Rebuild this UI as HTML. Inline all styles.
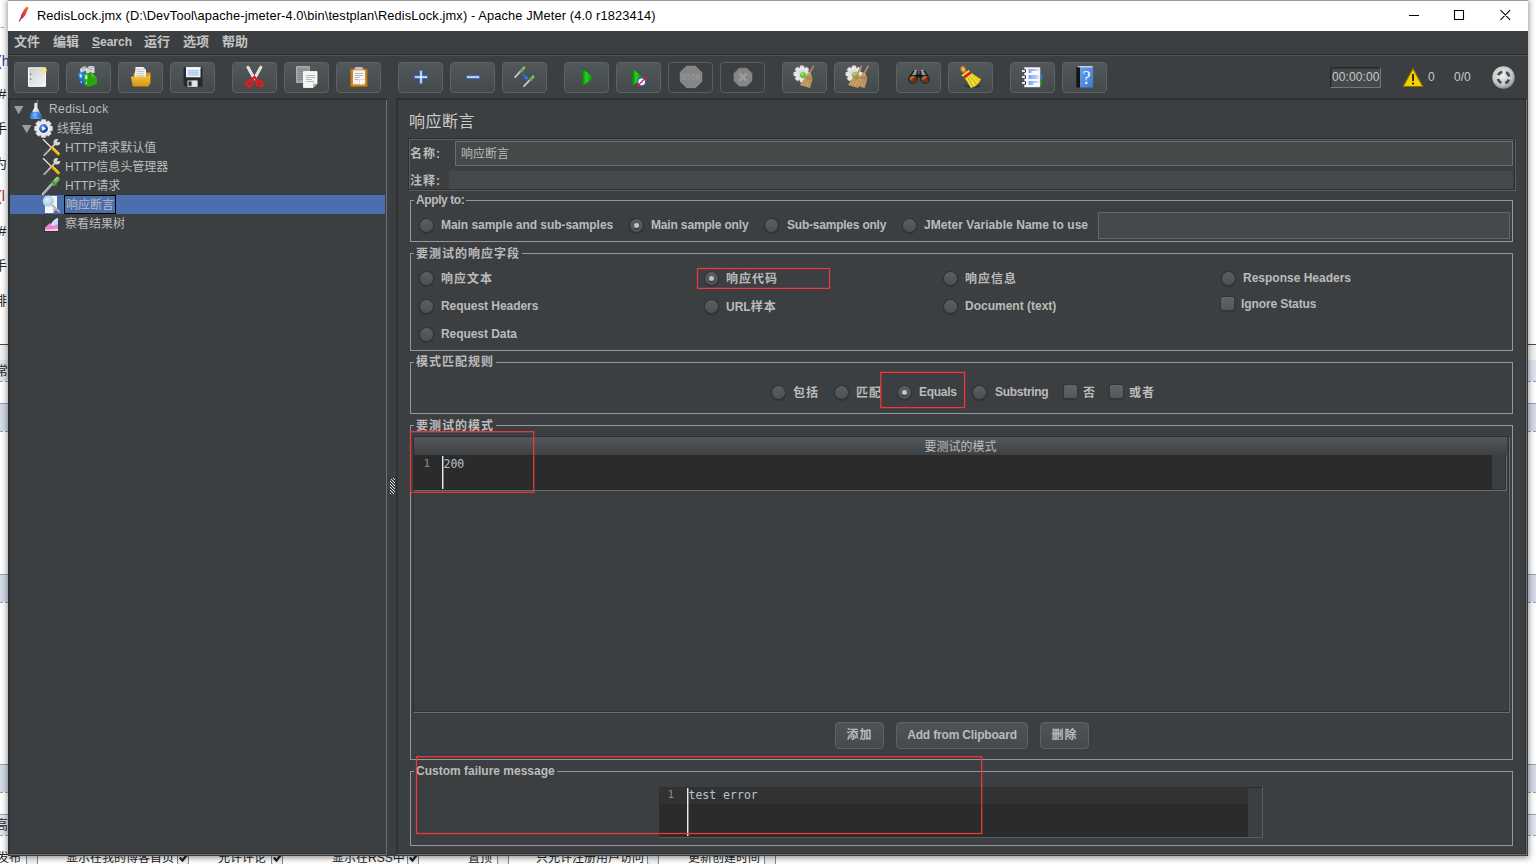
<!DOCTYPE html>
<html lang="zh">
<head>
<meta charset="utf-8">
<title>RedisLock.jmx - Apache JMeter</title>
<style>
*{box-sizing:border-box;margin:0;padding:0}
html,body{width:1536px;height:864px;overflow:hidden;background:#fff}
body{position:relative;font-family:"Liberation Sans","Noto Sans CJK SC",sans-serif;font-size:12px;line-height:14px;color:#bbb}
div,span,i,b,svg{position:absolute;display:block}
svg{overflow:visible}
span,b{white-space:nowrap}
#bgpage{left:0;top:0;width:1536px;height:864px;background:#fff;overflow:hidden;color:#333}
#win{left:8px;top:0;width:1520px;height:856px;background:#3c3f41;overflow:hidden;box-shadow:0 1px 6px 1px rgba(0,0,0,.42)}
#titlebar{left:0;top:0;width:1520px;height:31px;background:#fff;border-top:1px solid #9a9a9a}
#titlebar .t{left:29px;top:7px;font-size:12.8px;line-height:16px;color:#000;letter-spacing:.13px}
#menubar{left:0;top:31px;width:1520px;height:24px;background:#3c3f41;border-bottom:1px solid #2d2f31}
#menubar span{top:3px;font-size:13px;line-height:16px;color:#c4c4c4;font-weight:bold}
#toolbar{left:0;top:55px;width:1520px;height:43px;background:#3c3f41;border-top:1px solid #515456}
.tb{top:6px;width:45px;height:31px;border:1px solid #5f6263;border-radius:4px;background:linear-gradient(#52575a,#44494b)}
.tb.dis{background:#3c3f41;border-color:#5a5d5e}
.tb svg{left:11px;top:4px;width:22px;height:22px}
.bl{font-weight:bold;font-size:12px;line-height:14px;color:#bbb}
.cb{font-weight:bold;font-size:12px;line-height:14px;color:#bbb;letter-spacing:1px}
.grp{border:1px solid #979797}
.gt{background:#3c3f41;padding:0 2px 0 2px;font-weight:bold;font-size:12px;line-height:14px;color:#bbb}
.rd{width:13px;height:13px;border-radius:50%;background:linear-gradient(#5c5f61,#4c5052);box-shadow:0 0 0 1px #303335, 0 1px 1px 1px rgba(30,30,30,.35)}
.rd.on::after{content:"";position:absolute;left:4px;top:4px;width:5px;height:5px;border-radius:50%;background:#c4c4c4;box-shadow:0 1px 0 #2a2a2a}
.ck{width:13px;height:13px;border-radius:2px;background:linear-gradient(#626568,#54575a);box-shadow:0 0 0 1px #34373a,0 1px 1px 1px rgba(30,30,30,.3)}
.cbg{letter-spacing:1px}
em{font-style:normal;letter-spacing:0}
.red{border:1px solid #e03a3a}
.btn{height:27px;border:1px solid #5f6263;border-radius:4px;background:linear-gradient(#4f5456,#44494b);text-align:center;font-weight:bold;font-size:12px;line-height:25px;color:#bbb}
.mono{font-family:"DejaVu Sans Mono","Liberation Mono",monospace;font-size:11.5px;line-height:14px}
</style>
</head>
<body>
<div id="bgpage"><i style="left:0;top:344px;width:1536px;height:1px;background:#4a4a4a"></i>
<i style="left:0;top:345px;width:1536px;height:15px;background:#f2f2f2"></i>
<i style="left:0;top:360px;width:1536px;height:21px;background:#dfe5ef"></i>
<i style="left:0;top:381px;width:1536px;height:0;border-top:1px dashed #9aa0a8"></i>
<i style="left:0;top:403px;width:1536px;height:1px;background:#a0a0a0"></i>
<i style="left:0;top:404px;width:1536px;height:27px;background:#d4dce8"></i>
<i style="left:0;top:431px;width:1536px;height:0;border-top:1px dashed #9aa0a8"></i>
<i style="left:0;top:574px;width:1536px;height:1px;background:#a0a0a0"></i>
<i style="left:0;top:575px;width:1536px;height:27px;background:#d4dce8"></i>
<i style="left:0;top:602px;width:1536px;height:0;border-top:1px dashed #9aa0a8"></i>
<i style="left:0;top:764px;width:1536px;height:1px;background:#a0a0a0"></i>
<i style="left:0;top:765px;width:1536px;height:27px;background:#d4dce8"></i>
<i style="left:0;top:792px;width:1536px;height:0;border-top:1px dashed #9aa0a8"></i>
<i style="left:0;top:814px;width:1536px;height:1px;background:#a0a0a0"></i>
<i style="left:0;top:815px;width:1536px;height:20px;background:#e2e7f0"></i>
<i style="left:0;top:835px;width:1536px;height:0;border-top:1px dashed #9aa0a8"></i>
<span style="left:-4px;top:20px;font-size:12px;line-height:14px;color:#7ac">"-</span>
<span style="left:-3px;top:53px;font-size:14px;line-height:16px;color:#33a">(h</span>
<span style="left:-2px;top:85px;font-size:15px;line-height:17px;color:#222">#</span>
<span style="left:-6px;top:121px;font-size:13px;line-height:15px;color:#222">手</span>
<span style="left:-6px;top:156px;font-size:13px;line-height:15px;color:#222">为</span>
<span style="left:-3px;top:188px;font-size:14px;line-height:16px;color:#a22">(l</span>
<span style="left:-2px;top:222px;font-size:15px;line-height:17px;color:#222">#</span>
<span style="left:-6px;top:258px;font-size:13px;line-height:15px;color:#222">手</span>
<span style="left:-6px;top:293px;font-size:13px;line-height:15px;color:#222">排</span>
<span style="left:-5px;top:363px;font-size:13px;line-height:15px;color:#222">常</span>
<span style="left:-5px;top:817px;font-size:13px;line-height:15px;color:#222">高</span>
<span style="left:-3px;top:851px;font-size:12px;line-height:14px;color:#222">发布</span>
<i style="left:26px;top:853px;width:12px;height:12px;border:1px solid #8a8a8a;border-radius:2px;background:#f4f4f4"></i>
<span style="left:66px;top:851px;font-size:12px;line-height:14px;color:#222">显示在我的博客首页</span>
<i style="left:177px;top:853px;width:12px;height:12px;border:1px solid #8a8a8a;border-radius:2px;background:#f4f4f4"></i>
<svg style="left:179px;top:854px;width:9px;height:8px" viewBox="0 0 9 8"><path d="M.8 3.500l2.700 3 4.700-6" stroke="#222" stroke-width="2.300" fill="none"/></svg>
<span style="left:218px;top:851px;font-size:12px;line-height:14px;color:#222">允许评论</span>
<i style="left:271px;top:853px;width:12px;height:12px;border:1px solid #8a8a8a;border-radius:2px;background:#f4f4f4"></i>
<svg style="left:273px;top:854px;width:9px;height:8px" viewBox="0 0 9 8"><path d="M.8 3.500l2.700 3 4.700-6" stroke="#222" stroke-width="2.300" fill="none"/></svg>
<span style="left:332px;top:851px;font-size:12px;line-height:14px;color:#222">显示在RSS中</span>
<i style="left:407px;top:853px;width:12px;height:12px;border:1px solid #8a8a8a;border-radius:2px;background:#f4f4f4"></i>
<svg style="left:409px;top:854px;width:9px;height:8px" viewBox="0 0 9 8"><path d="M.8 3.500l2.700 3 4.700-6" stroke="#222" stroke-width="2.300" fill="none"/></svg>
<span style="left:468px;top:851px;font-size:12px;line-height:14px;color:#222">置顶</span>
<i style="left:497px;top:853px;width:12px;height:12px;border:1px solid #8a8a8a;border-radius:2px;background:#f4f4f4"></i>
<span style="left:536px;top:851px;font-size:12px;line-height:14px;color:#222">只允许注册用户访问</span>
<i style="left:647px;top:853px;width:12px;height:12px;border:1px solid #8a8a8a;border-radius:2px;background:#f4f4f4"></i>
<span style="left:688px;top:851px;font-size:12px;line-height:14px;color:#222">更新创建时间</span>
<i style="left:764px;top:853px;width:12px;height:12px;border:1px solid #8a8a8a;border-radius:2px;background:#f4f4f4"></i>
</div>
<div id="win">
<div id="titlebar"><svg style="left:10px;top:5px;width:12px;height:18px" viewBox="0 0 12 18"><defs><linearGradient id="fe" x1="1" y1="0" x2="0" y2="1"><stop offset="0" stop-color="#f79a1c"/><stop offset=".4" stop-color="#e8452a"/><stop offset="1" stop-color="#b0207a"/></linearGradient></defs><path d="M9.200 .7c1 .2 1.500 1 1.100 2.100l-3.400 6.900-3.300 3.500-1.500-.500 1.200-4.300 3.700-6.200c.6-1 1.400-1.600 2.200-1.500z" fill="url(#fe)"/><path d="M2.600 12.600l-1.300 2.900" stroke="#6a2a8a" stroke-width="1.100"/></svg>
<span class="t">RedisLock.jmx (D:\DevTool\apache-jmeter-4.0\bin\testplan\RedisLock.jmx) - Apache JMeter (4.0 r1823414)</span><svg style="left:1398px;top:7px;width:120px;height:16px" viewBox="0 0 120 16"><path d="M3 7.500h10M48.500 2.500h9v9h-9zM94.500 2.200l9.600 9.600M104.100 2.200l-9.600 9.600" stroke="#000" stroke-width="1.100" fill="none"/></svg></div>
<div style="left:0;top:31px;width:1px;height:825px;background:#2f3234"></div><div id="menubar"><span style="left:6px">文件</span><span style="left:45px">编辑</span><span style="left:84px;font-size:12px;top:3px"><u>S</u>earch</span><span style="left:136px">运行</span><span style="left:175px">选项</span><span style="left:214px">帮助</span></div>
<div id="toolbar"><svg style="left:0;top:0;width:0;height:0"><defs>
<linearGradient id="pg" x1="0" y1="0" x2="1" y2="1"><stop offset="0" stop-color="#cfcfcf"/><stop offset="1" stop-color="#f4f4f4"/></linearGradient>
<radialGradient id="ys"><stop offset="0" stop-color="#fffbe0"/><stop offset=".45" stop-color="#f3e26a"/><stop offset="1" stop-color="#e8d040" stop-opacity="0"/></radialGradient>
<linearGradient id="fo" x1="0" y1="0" x2="0" y2="1"><stop offset="0" stop-color="#f3c64a"/><stop offset="1" stop-color="#d9960a"/></linearGradient>
<linearGradient id="gr" x1="0" y1="0" x2="1" y2="0"><stop offset="0" stop-color="#0a7a0a"/><stop offset=".35" stop-color="#28d028"/><stop offset="1" stop-color="#0c6a0c"/></linearGradient>
<linearGradient id="bk" x1="0" y1="0" x2="1" y2="1"><stop offset="0" stop-color="#6aa0ec"/><stop offset="1" stop-color="#3c78d0"/></linearGradient>
<linearGradient id="gn" x1="0" y1="0" x2="0" y2="1"><stop offset="0" stop-color="#5ad020"/><stop offset="1" stop-color="#1e9a08"/></linearGradient>
<linearGradient id="bl" x1="0" y1="0" x2="0" y2="1"><stop offset="0" stop-color="#3a9ae8"/><stop offset="1" stop-color="#0a5cb8"/></linearGradient>
<linearGradient id="ln" x1="0" y1="0" x2="1" y2="0"><stop offset="0" stop-color="#0040ff"/><stop offset="1" stop-color="#9cc4ff"/></linearGradient>
<radialGradient id="rb" cx=".45" cy=".4" r=".6"><stop offset="0" stop-color="#f2f2f2"/><stop offset=".7" stop-color="#c8c8c8"/><stop offset="1" stop-color="#8e8e8e"/></radialGradient>
</defs></svg>
<div class="tb" style="left:6px"><svg viewBox="0 0 24 24" style="left:10px;top:3px;width:24px;height:24px"><path d="M3.500 1.800h17v18.500h-17z" fill="url(#pg)" stroke="#fff" stroke-width="1"/><rect x="5" y="7.500" width="1.200" height="1.200" fill="#555"/><rect x="5" y="12.500" width="1.200" height="1.200" fill="#555"/><circle cx="19.100" cy="4.200" r="3.600" fill="url(#ys)"/></svg></div>
<div class="tb" style="left:58px"><svg viewBox="0 0 24 24" style="left:10px;top:3px;width:24px;height:24px"><path d="M3 3l3-2.500h3l1 2 2-2.500h4l1.500 1v6h-14z" fill="#d8dadc"/><path d="M4 2l5-1M11 2.500l5-1.500M5 3.500l4-1M12 4l4-1" stroke="#8a8c8e" stroke-width=".6"/><path d="M1 7.500l4-1.500 3 1v12l-4.500-1.200z" fill="url(#bl)"/><path d="M5 6l4-1.500v11l-1 3z" fill="#1f74cc"/><rect x="2.800" y="8.500" width="2" height="3" fill="#cfe6ff"/><circle cx="4.300" cy="16" r=".8" fill="#e8f4ff"/><path d="M7.500 8l3.500-.5v13.500l-3.500-1.200z" fill="url(#gn)"/><path d="M11 7.500l3-2v5.500l6 1v6l-9 3z" fill="#2aa50e"/><path d="M14 5.500l6 6.500-6-1z" fill="#3cc218"/><rect x="8.300" y="9.500" width="1.800" height="3.500" fill="#d8ffc8"/><circle cx="9.300" cy="17.300" r=".8" fill="#eaffea"/></svg></div>
<div class="tb" style="left:110px"><svg viewBox="0 0 24 24" style="left:10px;top:3px;width:24px;height:24px"><path d="M4.500 7l1.500-.5h14.500l1 .8v10.500h-16.500z" fill="#d89a10"/><path d="M6.500 1h8l2.500 3v8h-11.500z" fill="#f2f2f2"/><path d="M7.500 3.500h6M7.500 5.500h7.500M7.500 7.500h7.500M7.500 9.500h7.500" stroke="#b9b9b9" stroke-width=".8"/><path d="M14.500 1v3h2.500z" fill="#c8c8c8"/><path d="M2 11.500c0-.6.400-1 1-1h15.500c.8 0 1.300-.4 1.500-1l.5-1 .8 1.500-1.200 9.500c-.1.600-.5 1-1.100 1h-14c-.8 0-1.200-.3-1.400-1z" fill="url(#fo)"/></svg></div>
<div class="tb" style="left:162px"><svg viewBox="0 0 24 24" style="left:10px;top:3px;width:24px;height:24px"><path d="M2.500 2.500c0-.8.500-1.300 1.300-1.300h16.400c.8 0 1.300.5 1.300 1.300v17c0 .8-.5 1.300-1.300 1.300h-15.500l-2.200-2z" fill="#29292b"/><path d="M5 1.300h14.500v10h-14.500z" fill="#e8f0fa"/><path d="M5 1.300h14.500v1.500h-14.500z" fill="#fff"/><path d="M7 4.800h10.500M7 6.800h10.500M7 8.800h10.500" stroke="#8fb0d8" stroke-width=".9"/><path d="M6.500 14.500h10v6.300h-10z" fill="#d8d8d8"/><path d="M7.500 15.500h3v4.300h-3z" fill="#2c2c2e"/><path d="M11.500 14.500h5v6.300h-5z" fill="#f0f0f0" opacity=".6"/></svg></div>
<div class="tb" style="left:224px"><svg viewBox="0 0 24 24" style="left:10px;top:3px;width:24px;height:24px"><path d="M5 1.200l6.300 11.500M17.800 1.200l-6.300 11.500" stroke="#ececec" stroke-width="3" stroke-linecap="round"/><path d="M5 1.200l6.300 11.500M17.800 1.200l-6.300 11.500" stroke="#b0b0b0" stroke-width=".8" stroke-dasharray="1 1"/><ellipse cx="6.200" cy="17" rx="3.300" ry="2.500" transform="rotate(-35 6.800 17)" fill="none" stroke="#e31b1b" stroke-width="2.600"/><ellipse cx="16.600" cy="17" rx="3.300" ry="2.500" transform="rotate(35 16 17)" fill="none" stroke="#e31b1b" stroke-width="2.600"/><path d="M8.800 14l2.600-3 2.600 3" stroke="#e31b1b" stroke-width="2.600" fill="none" stroke-linejoin="round"/></svg></div>
<div class="tb" style="left:276px"><svg viewBox="0 0 24 24" style="left:10px;top:3px;width:24px;height:24px"><path d="M1.500 .5h13v16h-13z" fill="#9a9d9f" stroke="#b8babb" stroke-width=".8"/><path d="M3 3.500h10M3 5.500h10M3 7.500h5M3 9.500h5M3 11.500h5M3 13.500h5" stroke="#7d8082" stroke-width=".8"/><path d="M8.500 5.500h13.500v12l-4 4h-9.500z" fill="#f4f4f4" stroke="#fff" stroke-width=".8"/><path d="M22 17.500l-4 4v-4z" fill="#b4b4ac"/><path d="M11 9.500h9M11 11.500h9M11 13.500h6M11 15.500h8" stroke="#a8a8a8" stroke-width=".8"/></svg></div>
<div class="tb" style="left:328px"><svg viewBox="0 0 24 24" style="left:10px;top:3px;width:24px;height:24px"><rect x="3.200" y="2.500" width="17.300" height="18.500" rx="1.200" fill="#b06a10"/><rect x="4.200" y="3.500" width="15.300" height="16.500" rx=".8" fill="#cd8622"/><path d="M8 1.800c0-.5.400-.8.800-.8h6c.5 0 .8.300.8.800l1 1.900h-9.600z" fill="#c4c4bc"/><path d="M6 4.300h12v14l-3 0-9 0z" fill="#f4f4f4"/><path d="M7.500 7.500h8.500M7.500 9.500h8.500M7.500 11.500h5M7.500 13.500h4" stroke="#a4a4a4" stroke-width=".8"/><path d="M12.500 13.500h5.500v2l-3 3h-2.500z" fill="#fbfbfb" stroke="#c8c8c0" stroke-width=".6"/></svg></div>
<div class="tb" style="left:390px"><svg viewBox="0 0 24 24" style="left:10px;top:3px;width:24px;height:24px"><path d="M10.700 4.300h2.600v5.500h5.400v2.600h-5.400v5.500h-2.600v-5.500h-5.400v-2.600h5.400z" fill="#dfe9fb" stroke="#2d64c8" stroke-width="1" stroke-linejoin="round"/></svg></div>
<div class="tb" style="left:442px"><svg viewBox="0 0 24 24" style="left:10px;top:3px;width:24px;height:24px"><rect x="5.500" y="9.800" width="13.200" height="2.600" rx=".4" fill="#dfe9fb" stroke="#2d64c8" stroke-width="1"/></svg></div>
<div class="tb" style="left:494px"><svg viewBox="0 0 24 24" style="left:10px;top:3px;width:24px;height:24px"><g transform="translate(1.5 0) scale(0.62)"><path d="M1 18l10-11" stroke="#dcdedf" stroke-width="2.600" stroke-linecap="round"/><path d="M1.200 18.200l9.500-10.400" stroke="#8a8d8f" stroke-width=".9"/><path d="M11.500 7.500l4-4.500" stroke="#6cb55a" stroke-width="4.600" stroke-linecap="round"/><path d="M10.200 5.600l3.800 3.300" stroke="#4a8f3c" stroke-width="1.600" stroke-linecap="round"/><path d="M13 4l2.500-2.700" stroke="#a4dc94" stroke-width="1.200" stroke-linecap="round"/></g><g transform="translate(10.5 9) scale(0.62)"><path d="M1 18l10-11" stroke="#dcdedf" stroke-width="2.600" stroke-linecap="round"/><path d="M1.200 18.200l9.500-10.400" stroke="#8a8d8f" stroke-width=".9"/><path d="M11.500 7.500l4-4.500" stroke="#6cb55a" stroke-width="4.600" stroke-linecap="round"/><path d="M10.200 5.600l3.800 3.300" stroke="#4a8f3c" stroke-width="1.600" stroke-linecap="round"/><path d="M13 4l2.500-2.700" stroke="#a4dc94" stroke-width="1.200" stroke-linecap="round"/></g><path d="M9.200 7.800l4 4" stroke="#2a7ae8" stroke-width="1.300"/><path d="M15.300 13.800l-4.600-1 3.400-3.400z" fill="#2a7ae8"/></svg></div>
<div class="tb" style="left:556px"><svg viewBox="0 0 24 24" style="left:10px;top:3px;width:24px;height:24px"><path d="M7 2.200l12.400 9-12.400 9z" fill="url(#gr)"/><path d="M7 2.200l12.400 9" stroke="#064a06" stroke-width=".6" opacity=".6"/></svg></div>
<div class="tb" style="left:608px"><svg viewBox="0 0 24 24" style="left:10px;top:3px;width:24px;height:24px"><path d="M5 2.200l11.400 9-11.400 9z" fill="url(#gr)"/><circle cx="14.700" cy="15.800" r="4" fill="#f4f6fa" stroke="#2a62c0" stroke-width="1.300"/><path d="M10 20.500l9.500-9.500" stroke="#e01818" stroke-width="1.300"/></svg></div>
<div class="tb dis" style="left:660px"><svg viewBox="0 0 24 24" style="left:10px;top:3px;width:24px;height:24px"><path d="M22.72 15.34L16.44 21.62L7.56 21.62L1.28 15.34L1.28 6.46L7.56 0.18L16.44 0.18L22.72 6.46Z" fill="#858585" stroke="#9a9a9a" stroke-width=".8"/><text x="12" y="14.200" font-family="Liberation Sans,sans-serif" font-weight="bold" font-size="9" text-anchor="middle" fill="#979797" textLength="18.500" lengthAdjust="spacingAndGlyphs">STOP</text></svg></div>
<div class="tb dis" style="left:712px"><svg viewBox="0 0 24 24" style="left:10px;top:3px;width:24px;height:24px"><path d="M20.96 14.81L15.71 20.06L8.29 20.06L3.04 14.81L3.04 7.39L8.29 2.14L15.71 2.14L20.96 7.39Z" fill="#858585" stroke="#909090" stroke-width=".6"/><path d="M8.300 7.400l7.400 7.400M15.700 7.400l-7.400 7.400" stroke="#9c9c9c" stroke-width="2.600"/></svg></div>
<div class="tb" style="left:774px"><svg viewBox="0 0 24 24" style="left:10px;top:3px;width:24px;height:24px"><path d="M17.23 6.33L17.23 9.67L14.90 10.22L14.74 10.60L16.00 12.64L13.64 15.00L11.60 13.74L11.22 13.90L10.67 16.23L7.33 16.23L6.78 13.90L6.40 13.74L4.36 15.00L2.00 12.64L3.26 10.60L3.10 10.22L0.77 9.67L0.77 6.33L3.10 5.78L3.26 5.40L2.00 3.36L4.36 1.00L6.40 2.26L6.78 2.10L7.33 -0.23L10.67 -0.23L11.22 2.10L11.60 2.26L13.64 1.00L16.00 3.36L14.74 5.40L14.90 5.78Z" fill="#e9e9e9" stroke="#d0d0d0" stroke-width=".5" stroke-linejoin="round"/><circle cx="9" cy="8" r="4.600" fill="#dcdcdc"/><circle cx="10" cy="9.100" r="2.900" fill="#52c41a"/><circle cx="9.500" cy="8.300" r="1.300" fill="#a8ee7a"/><path d="M20.3 0.3L16.3 7.7" stroke="#b98d55" stroke-width="1.700" stroke-linecap="round"/><path d="M15.2 6.3L18.0 7.8L19.5 12.9L17.0 22.0L6.9 19.0L11.0 12.5Z" fill="#c9a26c"/><path d="M15.8 8.5L8.8 19.3M16.5 9.0L11.8 20.4M17.3 9.5L14.8 21.2M18.3 10.5L16.8 21.5" stroke="#a07a44" stroke-width=".6" fill="none"/><path d="M12.0 11.2L19.1 13.2" stroke="#8e6a3c" stroke-width=".7"/></svg></div>
<div class="tb" style="left:826px"><svg viewBox="0 0 24 24" style="left:10px;top:3px;width:24px;height:24px"><path d="M17.23 6.33L17.23 9.67L14.90 10.22L14.74 10.60L16.00 12.64L13.64 15.00L11.60 13.74L11.22 13.90L10.67 16.23L7.33 16.23L6.78 13.90L6.40 13.74L4.36 15.00L2.00 12.64L3.26 10.60L3.10 10.22L0.77 9.67L0.77 6.33L3.10 5.78L3.26 5.40L2.00 3.36L4.36 1.00L6.40 2.26L6.78 2.10L7.33 -0.23L10.67 -0.23L11.22 2.10L11.60 2.26L13.64 1.00L16.00 3.36L14.74 5.40L14.90 5.78Z" fill="#e9e9e9" stroke="#d0d0d0" stroke-width=".5" stroke-linejoin="round"/><circle cx="9" cy="8" r="4.600" fill="#dcdcdc"/><circle cx="10" cy="9.100" r="2.900" fill="#52c41a"/><circle cx="9.500" cy="8.300" r="1.300" fill="#a8ee7a"/><path d="M16.5 0.3L12.5 7.7" stroke="#b98d55" stroke-width="1.700" stroke-linecap="round"/><path d="M11.4 6.3L14.2 7.8L15.7 12.9L13.2 22.0L3.1 19.0L7.2 12.5Z" fill="#c9a26c"/><path d="M12.0 8.5L5.0 19.3M12.7 9.0L8.0 20.4M13.5 9.5L11.0 21.2M14.5 10.5L13.0 21.5" stroke="#a07a44" stroke-width=".6" fill="none"/><path d="M8.2 11.2L15.3 13.2" stroke="#8e6a3c" stroke-width=".7"/><path d="M23.0 0.3L19.0 7.7" stroke="#b98d55" stroke-width="1.700" stroke-linecap="round"/><path d="M17.9 6.3L20.7 7.8L22.2 12.9L19.7 22.0L9.6 19.0L13.7 12.5Z" fill="#c9a26c"/><path d="M18.5 8.5L11.5 19.3M19.2 9.0L14.5 20.4M20.0 9.5L17.5 21.2M21.0 10.5L19.5 21.5" stroke="#a07a44" stroke-width=".6" fill="none"/><path d="M14.7 11.2L21.8 13.2" stroke="#8e6a3c" stroke-width=".7"/></svg></div>
<div class="tb" style="left:888px"><svg viewBox="0 0 24 24" style="left:10px;top:3px;width:24px;height:24px"><path d="M2.200 10.500l4.600-6.700h3.700v4h2.900v-4h3.700l4.600 6.700v3h-5.500v-2h-8.500v2h-5.500z" fill="#141414"/><circle cx="5.900" cy="13.300" r="4.700" fill="#141414"/><circle cx="18" cy="13.300" r="4.700" fill="#141414"/><path d="M4.800 8.800l2.800-3.900h2l-.3 4.100zM19.100 8.800l-2.800-3.900h-2l.3 4.100z" fill="#9a9a9a"/><path d="M7 4.300h3.300M13.600 4.300h3.300" stroke="#d4d4d4" stroke-width=".9"/><path d="M10.700 6.500h2.500l-.5 2h-1.500z" fill="#4e4e4e"/><circle cx="5.900" cy="13.400" r="3" fill="#7e3206"/><circle cx="18" cy="13.400" r="3" fill="#7e3206"/><path d="M3.200 14.300a2.800 2.800 0 0 1 4.700-3zM15.300 14.300a2.800 2.800 0 0 1 4.700-3z" fill="#cf6a1e"/><circle cx="5.900" cy="13.400" r="3.700" fill="none" stroke="#6a6a6a" stroke-width=".5"/><circle cx="18" cy="13.400" r="3.700" fill="none" stroke="#6a6a6a" stroke-width=".5"/></svg></div>
<div class="tb" style="left:940px"><svg viewBox="0 0 24 24" style="left:10px;top:3px;width:24px;height:24px"><ellipse cx="13.500" cy="20" rx="8.500" ry="1.800" fill="#2a2c2e" opacity=".55"/><ellipse cx="4.200" cy="3.300" rx="2.600" ry="3.500" transform="rotate(-25 4.200 3.300)" fill="#d08a20"/><ellipse cx="4.200" cy="3.300" rx="1.100" ry="2" transform="rotate(-25 4.200 3.300)" fill="#f0c070"/><path d="M2.400 9.300l7.500-5.500 1 2-7 5z" fill="#f0dc30"/><path d="M5.400 11.600l6.800-4.900 9.800 6.500q-2.500 6.500-10.100 8.800z" fill="#e6cf14"/><path d="M7.500 11.500l5 9.500M9.500 10l6 9.500M11 9l8 8" stroke="#f8f088" stroke-width=".9"/><path d="M8.500 11l5.500 10M10.300 9.600l7.500 8.900" stroke="#b49a08" stroke-width=".6"/><path d="M4.600 10.300l6.600-4.900 1.300 2-6.600 4.800z" fill="#e01414"/></svg></div>
<div class="tb" style="left:1002px"><svg viewBox="0 0 24 24" style="left:10px;top:3px;width:24px;height:24px"><path d="M3.500 1.500h15.500v19.500h-15.500z" fill="#fafafa" stroke="#d8d8d8" stroke-width=".6"/><path d="M19 8.500h2v5h-2z" fill="#3a80e8"/><path d="M19 13.500h2v5h-2z" fill="#18a018"/><g fill="#1e1e1e"><rect x="2.700" y="3.300" width="2.300" height="3.400" rx="1"/><rect x="2.700" y="9.300" width="2.300" height="3.400" rx="1"/><rect x="2.700" y="15.300" width="2.300" height="3.400" rx="1"/></g><g fill="#e8e8e8"><rect x="1" y="4" width="3" height="2"/><rect x="1" y="10" width="3" height="2"/><rect x="1" y="16" width="3" height="2"/></g><g stroke="url(#ln)" stroke-width="1"><path d="M7.500 4h10M7.500 6h3M7.500 10h10M7.500 12h10M7.500 16h10M7.500 18h5"/></g></svg></div>
<div class="tb" style="left:1054px"><svg viewBox="0 0 24 24" style="left:10px;top:3px;width:24px;height:24px"><path d="M3.300 1.300c0-.6.400-1 1-1h2.700v21.200h-2.700c-.6 0-1-.4-1-1z" fill="#141414"/><path d="M7 .3h12.500c.4 0 .6.200.6.600v20c0 .4-.2.600-.6.600h-12.500z" fill="url(#bk)"/><path d="M4.500.8h15" stroke="#f4f4f4" stroke-width="1"/><text x="13.600" y="17.500" font-family="Liberation Serif,serif" font-size="18" text-anchor="middle" fill="#f4f8ff">?</text></svg></div>
<div style="left:1322px;top:11px;width:51px;height:21px;border:1px solid;border-color:#26282a #747778 #747778 #26282a;background:#45494a;box-shadow:inset 1px 1px 0 #333638"></div>
<span style="left:1324px;top:14px;font-size:12px;line-height:14px;color:#c8c8c8;letter-spacing:.1px">00:00:00</span>
<svg style="left:1394px;top:11px;width:22px;height:21px" viewBox="0 0 22 21"><path d="M11 1.500l9.800 18h-19.600z" fill="#f6d000" stroke="#8a7200" stroke-width="1.200" stroke-linejoin="round"/><path d="M11 7v7" stroke="#1a1a1a" stroke-width="1.800"/><circle cx="11" cy="16.600" r="1.100" fill="#1a1a1a"/></svg>
<span style="left:1420px;top:14px;font-size:12px;line-height:14px;color:#c8c8c8">0</span>
<span style="left:1446px;top:14px;font-size:12px;line-height:14px;color:#c8c8c8">0/0</span>
<svg style="left:1484px;top:10px;width:23px;height:23px" viewBox="0 0 23 23"><circle cx="11.500" cy="11.500" r="11.200" fill="url(#rb)"/><circle cx="11.500" cy="11.500" r="5.800" fill="none" stroke="#4a4d4f" stroke-width="2.800" stroke-dasharray="5.100 4" stroke-dashoffset="-2"/></svg>
</div>
<div style="left:0;top:98px;width:379px;height:757px;border-top:2px solid #2f3234;border-left:2px solid #2f3234;border-bottom:1px solid #6c7073;background:#3c3f41"></div><div style="left:2px;top:853px;width:376px;height:1px;background:#2f3234"></div>
<div style="left:378px;top:100px;width:1px;height:755px;background:#6c7073"></div>
<svg style="left:382px;top:478px;width:5px;height:16px" viewBox="0 0 5 16"><g fill="#e6e6e6"><rect x="3" y="0" width="1" height="1"/><rect x="1" y="1" width="1" height="1"/><rect x="4" y="1" width="1" height="1"/><rect x="2" y="2" width="1" height="1"/><rect x="0" y="3" width="1" height="1"/><rect x="3" y="3" width="1" height="1"/><rect x="1" y="4" width="1" height="1"/><rect x="4" y="4" width="1" height="1"/><rect x="2" y="5" width="1" height="1"/><rect x="0" y="6" width="1" height="1"/><rect x="3" y="6" width="1" height="1"/><rect x="1" y="7" width="1" height="1"/><rect x="4" y="7" width="1" height="1"/><rect x="2" y="8" width="1" height="1"/><rect x="0" y="9" width="1" height="1"/><rect x="3" y="9" width="1" height="1"/><rect x="1" y="10" width="1" height="1"/><rect x="4" y="10" width="1" height="1"/><rect x="2" y="11" width="1" height="1"/><rect x="0" y="12" width="1" height="1"/><rect x="3" y="12" width="1" height="1"/><rect x="1" y="13" width="1" height="1"/><rect x="4" y="13" width="1" height="1"/><rect x="2" y="14" width="1" height="1"/><rect x="0" y="15" width="1" height="1"/><rect x="3" y="15" width="1" height="1"/></g></svg>
<div style="left:2px;top:195px;width:375px;height:19px;background:#4b6eaf"></div>
<div style="left:56px;top:195px;width:52px;height:19px;border:1px solid #000"></div>
<svg style="left:6px;top:106px;width:10px;height:9px" viewBox="0 0 10 9"><path d="M0 0h9.400l-4.700 8.300z" fill="#9b9ea0"/></svg>
<svg style="left:14px;top:125px;width:10px;height:9px" viewBox="0 0 10 9"><path d="M0 0h9.400l-4.700 8.300z" fill="#9b9ea0"/></svg>
<span style="left:41px;top:102px;font-size:12px;line-height:14px;color:#bbb"><em style="letter-spacing:.4px">RedisLock</em></span>
<span style="left:49px;top:122px;font-size:12px;line-height:14px;color:#bbb">线程组</span>
<span style="left:57px;top:141px;font-size:12px;line-height:14px;color:#bbb">HTTP请求默认值</span>
<span style="left:57px;top:160px;font-size:12px;line-height:14px;color:#bbb">HTTP信息头管理器</span>
<span style="left:57px;top:179px;font-size:12px;line-height:14px;color:#bbb">HTTP请求</span>
<span style="left:58px;top:198px;font-size:12px;line-height:14px;color:#bbb">响应断言</span>
<span style="left:57px;top:217px;font-size:12px;line-height:14px;color:#bbb">察看结果树</span>
<svg style="left:21px;top:100px;width:13px;height:19px" viewBox="0 0 13 19">
<defs><linearGradient id="fg" x1="0" x2="1"><stop offset="0" stop-color="#1c6ae0"/><stop offset=".45" stop-color="#62a6f8"/><stop offset="1" stop-color="#1560d0"/></linearGradient></defs>
<path d="M8.800 .2L7.700 3.600" stroke="#9a9d9f" stroke-width="1"/>
<path d="M5.500 3h3v4.500l3.800 8.500c.5 1.500-.3 2.800-1.800 2.800h-7.500c-1.500 0-2.300-1.300-1.800-2.800l4.300-8.500z" fill="#d9dde2"/>
<path d="M6.300 3.500v4.300l-3.600 7.500" stroke="#fff" stroke-width="1.200" fill="none" opacity=".85"/>
<path d="M3.400 11.800h6.700l2.200 4.200c.5 1.500-.3 2.800-1.800 2.800h-7.500c-1.500 0-2.300-1.300-1.800-2.800z" fill="url(#fg)"/>
<path d="M4.800 13v4M6.500 13.500v2" stroke="#bfe0ff" stroke-width=".7" opacity=".8"/>
</svg>
<svg style="left:26px;top:119px;width:19px;height:19px" viewBox="0 0 19 19">
<defs><radialGradient id="gb" cx=".4" cy=".35" r=".7"><stop offset="0" stop-color="#7fb0f0"/><stop offset=".6" stop-color="#2a5db8"/><stop offset="1" stop-color="#0c2a70"/></radialGradient></defs>
<path d="M18.48 7.49L18.48 11.51L15.95 12.23L15.99 12.13L17.27 14.43L14.43 17.27L12.13 15.99L12.23 15.95L11.51 18.48L7.49 18.48L6.77 15.95L6.87 15.99L4.57 17.27L1.73 14.43L3.01 12.13L3.05 12.23L0.52 11.51L0.52 7.49L3.05 6.77L3.01 6.87L1.73 4.57L4.57 1.73L6.87 3.01L6.77 3.05L7.49 0.52L11.51 0.52L12.23 3.05L12.13 3.01L14.43 1.73L17.27 4.57L15.99 6.87L15.95 6.77Z" fill="#e6e6e6" stroke="#c9c9c9" stroke-width=".6" stroke-linejoin="round"/>
<circle cx="9.5" cy="9.5" r="5.600" fill="#f4f4f4"/><circle cx="9.5" cy="9.5" r="4.400" fill="url(#gb)"/>
<path d="M8.200 7.300l3.600 2.200-3.600 2.200z" fill="#fff"/>
</svg>
<svg style="left:34px;top:138px;width:19px;height:19px" viewBox="0 0 19 19">
<path d="M2.300 17.200l11.200-11.700" stroke="#cfcfcf" stroke-width="1.700" stroke-linecap="round"/>
<path d="M2.300 17.200l4-4.200" stroke="#8c8f91" stroke-width=".9" stroke-linecap="round"/>
<circle cx="14.800" cy="4.300" r="3.300" fill="#d6d6d6"/>
<path d="M14.800 4.300l1.300-4.300 3 3.200z" fill="#3c3f41" transform="rotate(8 14.800 4.300)"/>
<path d="M1.300 1.500l8 8" stroke="#f0f0f0" stroke-width="1.100" stroke-linecap="round"/>
<path d="M10 9.800l6.400 6.300" stroke="#eeb200" stroke-width="2.800" stroke-linecap="round"/>
<path d="M10.800 9.200l6.200 6" stroke="#ffe066" stroke-width="1" stroke-linecap="round"/>
</svg>
<svg style="left:34px;top:157px;width:19px;height:19px" viewBox="0 0 19 19">
<path d="M2.300 17.200l11.200-11.700" stroke="#cfcfcf" stroke-width="1.700" stroke-linecap="round"/>
<path d="M2.300 17.200l4-4.200" stroke="#8c8f91" stroke-width=".9" stroke-linecap="round"/>
<circle cx="14.800" cy="4.300" r="3.300" fill="#d6d6d6"/>
<path d="M14.800 4.300l1.300-4.300 3 3.200z" fill="#3c3f41" transform="rotate(8 14.800 4.300)"/>
<path d="M1.300 1.500l8 8" stroke="#f0f0f0" stroke-width="1.100" stroke-linecap="round"/>
<path d="M10 9.800l6.400 6.300" stroke="#eeb200" stroke-width="2.800" stroke-linecap="round"/>
<path d="M10.800 9.200l6.200 6" stroke="#ffe066" stroke-width="1" stroke-linecap="round"/>
</svg>
<svg style="left:34px;top:176px;width:19px;height:19px" viewBox="0 0 19 19">
<path d="M1 18l10-11" stroke="#d4d6d8" stroke-width="2.400" stroke-linecap="round"/>
<path d="M1.200 18.200l9.500-10.400" stroke="#7e8183" stroke-width=".9"/>
<path d="M11.500 7.500l4-4.500" stroke="#6cb55a" stroke-width="4.400" stroke-linecap="round"/>
<path d="M10.200 5.600l3.800 3.300" stroke="#4a8f3c" stroke-width="1.600" stroke-linecap="round"/>
<path d="M13 4l2.500-2.700" stroke="#a4dc94" stroke-width="1.200" stroke-linecap="round"/>
</svg>
<svg style="left:34px;top:195px;width:19px;height:19px" viewBox="0 0 19 19">
<defs><radialGradient id="mg" cx=".4" cy=".35" r=".7"><stop offset="0" stop-color="#dff4ff"/><stop offset="1" stop-color="#8cc8ee"/></radialGradient></defs>
<path d="M3 1h12v12l-4 5h-8z" fill="#f4f4f4"/>
<path d="M15 13l-4 5v-4.200z" fill="#b8bcc4"/>
<path d="M9.500 9.500l7.500 7" stroke="#b4b6b8" stroke-width="2.200" stroke-linecap="round"/>
<circle cx="6.300" cy="6.200" r="5" fill="url(#mg)" stroke="#c9ced4" stroke-width="1.300"/>
</svg>
<svg style="left:34px;top:214px;width:19px;height:19px" viewBox="0 0 19 19">
<path d="M2.500 1v16.500h16" stroke="#2a2c2e" stroke-width="1" fill="none" stroke-dasharray="1 1"/>
<path d="M8.500 12c1-3.500 3-6.500 7.500-7.800v9.800z" fill="#bcd8ff"/>
<path d="M9 12c1.500-4 4-6.500 7-7.500" stroke="#fff" stroke-width="1" fill="none"/>
<path d="M3 17v-3.500l5-4.500 3 4 2-1.500 3-1.500v7z" fill="#ef7fd2"/>
<path d="M3 17v-1.500l13-1v2.500z" fill="#f9c3ec"/>
</svg>
<div class="" style="left:388px;top:98px;width:1131px;height:757px;border:2px solid #2f3234;border-right:1px solid #6c7073;border-bottom:1px solid #6c7073;background:#3c3f41"></div>
<div class="" style="left:1517px;top:100px;width:1px;height:754px;background:#2f3234"></div>
<div class="" style="left:390px;top:853px;width:1128px;height:1px;background:#2f3234"></div>
<span style="left:401px;top:111px;font-size:16px;line-height:22px;letter-spacing:.5px;color:#ccc">响应断言</span>
<div class="" style="left:400px;top:138px;width:1107px;height:52px;border:1px solid #2c2e30;box-shadow:inset 1px 1px 0 #5b5e60, 1px 1px 0 #5b5e60"></div>
<span class="cb" style="left:402px;top:147px;">名称:</span>
<div class="" style="left:447px;top:141px;width:1058px;height:25px;background:#45494a;border:1px solid #6b6e6f"></div>
<span class="" style="left:453px;top:147px;color:#bbb">响应断言</span>
<span class="cb" style="left:402px;top:174px;">注释:</span>
<div class="" style="left:441px;top:171px;width:1064px;height:18px;background:#45494a"></div>
<div class="grp" style="left:402px;top:200px;width:1103px;height:42px;"></div>
<span class="gt" style="left:406px;top:193px;letter-spacing:-.4px">Apply to:</span>
<i class="rd" style="left:412px;top:219px"></i>
<span class="bl" style="left:433px;top:218px;letter-spacing:-0.045px;">Main sample and sub-samples</span>
<i class="rd on" style="left:622px;top:219px"></i>
<span class="bl" style="left:643px;top:218px;letter-spacing:-0.16px;">Main sample only</span>
<i class="rd" style="left:757px;top:219px"></i>
<span class="bl" style="left:779px;top:218px;letter-spacing:-0.22px;">Sub-samples only</span>
<i class="rd" style="left:895px;top:219px"></i>
<span class="bl" style="left:916px;top:218px;letter-spacing:0.05px;">JMeter Variable Name to use</span>
<div class="" style="left:1090px;top:212px;width:412px;height:27px;background:#45494a;border:1px solid #646768"></div>
<div class="grp" style="left:402px;top:253px;width:1103px;height:98px;"></div>
<span class="gt cbg" style="left:406px;top:247px;">要测试的响应字段</span>
<i class="rd" style="left:412px;top:272px"></i>
<span class="cb" style="left:433px;top:272px;">响应文本</span>
<i class="rd on" style="left:697px;top:272px"></i>
<span class="cb" style="left:718px;top:272px;">响应代码</span>
<i class="rd" style="left:936px;top:272px"></i>
<span class="cb" style="left:957px;top:272px;">响应信息</span>
<i class="rd" style="left:1214px;top:272px"></i>
<span class="bl" style="left:1235px;top:271px;">Response Headers</span>
<i class="rd" style="left:412px;top:300px"></i>
<span class="bl" style="left:433px;top:299px;letter-spacing:-0.05px;">Request Headers</span>
<i class="rd" style="left:697px;top:300px"></i>
<span class="cb" style="left:718px;top:300px;"><em>URL</em>样本</span>
<i class="rd" style="left:936px;top:300px"></i>
<span class="bl" style="left:957px;top:299px;">Document (text)</span>
<i class="rd" style="left:412px;top:328px"></i>
<span class="bl" style="left:433px;top:327px;letter-spacing:-0.06px;">Request Data</span>
<i class="ck" style="left:1213px;top:297px"></i>
<span class="bl" style="left:1233px;top:297px;letter-spacing:-0.1px;">Ignore Status</span>
<svg style="left:687px;top:266px;width:138px;height:26px" viewBox="0 0 138 26"><rect x="2.50" y="2.50" width="132.00" height="19.90" fill="none" stroke="#f03838" stroke-width="1.250"/></svg>
<div class="grp" style="left:402px;top:362px;width:1103px;height:52px;"></div>
<span class="gt cbg" style="left:406px;top:355px;">模式匹配规则</span>
<i class="rd" style="left:764px;top:386px"></i>
<span class="cb" style="left:785px;top:386px;">包括</span>
<i class="rd" style="left:827px;top:386px"></i>
<span class="cb" style="left:848px;top:386px;">匹配</span>
<svg style="left:870px;top:370px;width:90px;height:41px" viewBox="0 0 90 41"><rect x="2.80" y="2.40" width="83.80" height="35.20" fill="#3c3f41" stroke="#f03838" stroke-width="1.250"/></svg>
<i class="rd on" style="left:890px;top:386px"></i>
<span class="bl" style="left:911px;top:385px;letter-spacing:-0.3px;">Equals</span>
<i class="rd" style="left:965px;top:386px"></i>
<span class="bl" style="left:987px;top:385px;letter-spacing:-0.29px;">Substring</span>
<i class="ck" style="left:1056px;top:385px"></i>
<span class="cb" style="left:1075px;top:386px;">否</span>
<i class="ck" style="left:1102px;top:385px"></i>
<span class="cb" style="left:1121px;top:386px;">或者</span>
<div class="grp" style="left:402px;top:425px;width:1103px;height:335px;"></div>
<span class="gt cbg" style="left:406px;top:419px;">要测试的模式</span>
<div class="" style="left:405px;top:436px;width:1097px;height:277px;border:1px solid;border-color:#2d2f31 #6a6d6f #6a6d6f #2d2f31;background:#3c3f41;box-shadow:inset -1px -1px 0 #303234"></div>
<div class="" style="left:406px;top:437px;width:1093px;height:18px;background:linear-gradient(#54585b,#3e4143);text-align:center;color:#bbb;line-height:20px;font-size:12px;overflow:hidden"><span style="position:static;display:inline">要测试的模式</span></div>
<div class="" style="left:406px;top:455px;width:1093px;height:36px;background:#2b2b2b;border-right:1px solid #6a6d6f;border-bottom:1px solid #6a6d6f"></div>
<div class="" style="left:1484px;top:455px;width:14px;height:35px;background:#3c3f41;border-right:1px solid #303234;border-bottom:1px solid #303234"></div>
<div class="" style="left:406px;top:489px;width:1078px;height:1px;background:#26282a"></div>
<span class="mono" style="left:415.5px;top:457px;color:#8a8a86;font-size:11px">1</span>
<span class="mono" style="left:435.5px;top:457px;color:#b4c2d2">200</span>
<div class="" style="left:434px;top:456px;width:1px;height:33px;background:#e8e8e8;box-shadow:1px 0 0 rgba(232,232,232,.45)"></div>
<svg style="left:400px;top:429px;width:129px;height:67px" viewBox="0 0 129 67"><rect x="2.50" y="2.70" width="123.20" height="60.60" fill="none" stroke="#f03838" stroke-width="1.250"/></svg>
<div class="btn" style="left:827px;top:722px;width:49px;letter-spacing:1px;">添加</div>
<div class="btn" style="left:888px;top:722px;width:132px;"><em style="letter-spacing:-.17px">Add from Clipboard</em></div>
<div class="btn" style="left:1032px;top:722px;width:49px;letter-spacing:1px;">删除</div>
<div class="grp" style="left:402px;top:771px;width:1103px;height:75px;"></div>
<span class="gt" style="left:406px;top:764px;">Custom failure message</span>
<div class="" style="left:651px;top:787px;width:604px;height:51px;background:#2b2b2b;border-right:1px solid #5a5d5f;border-bottom:1px solid #5a5d5f"></div>
<div class="" style="left:651px;top:787px;width:589px;height:17px;background:#323232"></div>
<div class="" style="left:1240px;top:788px;width:14px;height:49px;background:#3c3f41"></div>
<span class="mono" style="left:659.5px;top:788px;color:#8a8a86;font-size:11px">1</span>
<span class="mono" style="left:680.5px;top:788px;color:#b4c2d2">test error</span>
<div class="" style="left:679px;top:788px;width:1px;height:48px;background:#e8e8e8;box-shadow:1px 0 0 rgba(232,232,232,.45)"></div>
<svg style="left:406px;top:754px;width:571px;height:83px" viewBox="0 0 571 83"><rect x="2.50" y="2.70" width="565.20" height="76.80" fill="none" stroke="#f03838" stroke-width="1.250"/></svg>
</div>
</body>
</html>
